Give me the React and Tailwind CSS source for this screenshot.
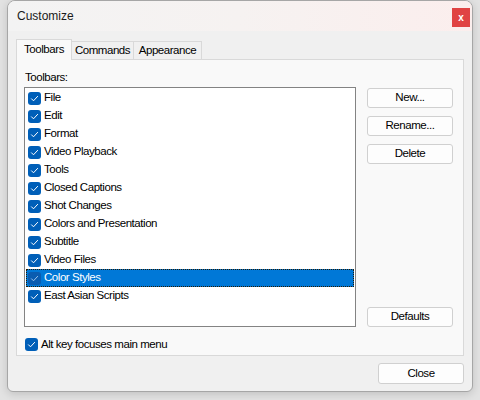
import React, { useState } from "react";

const toolbars = [
  "File",
  "Edit",
  "Format",
  "Video Playback",
  "Tools",
  "Closed Captions",
  "Shot Changes",
  "Colors and Presentation",
  "Subtitle",
  "Video Files",
  "Color Styles",
  "East Asian Scripts"
];

const CheckBox = ({ light }) => (
  <span
    className={`w-[13px] h-[13px] rounded-[3px] flex items-center justify-center shrink-0 ${light ? "bg-[#0a5cb0]" : "bg-[#005fb8]"}`}
  >
    <svg width="9" height="9" viewBox="0 0 9 9" fill="none">
      <path
        d="M1.5 4.8 L3.5 6.8 L7.6 2.4"
        stroke={light ? "#9fc3ea" : "#ffffff"}
        strokeWidth="1"
        strokeLinecap="round"
        strokeLinejoin="round"
      />
    </svg>
  </span>
);

const Button = ({ children, className = "" }) => (
  <button
    className={`h-[20px] w-[86px] rounded-[3px] border border-[#d0d0d0] bg-[#fdfdfd] leading-none ${className}`}
  >
    {children}
  </button>
);

const App = () => {
  const [selected, setSelected] = useState(10);

  return (
    <div
      className="w-[480px] h-[400px] bg-[#e2e2e2] pl-[7px]"
      style={{ fontFamily: "'Liberation Sans', Arial, sans-serif" }}
    >
      <div className="w-[466px] border border-[#a6a6a6] rounded-t-[8px] rounded-b-[6px] bg-[#f0f0f0] overflow-hidden shadow-[0_2px_8px_rgba(0,0,0,0.15)]">
        {/* title bar */}
        <div className="h-[30px] flex items-start justify-between bg-gradient-to-r from-[#f3f3f3] via-[#f6f2f1] to-[#fbeeed]">
          <span className="text-[12px] text-[#1a1a1a] mt-[9px] ml-[9px] leading-none">
            Customize
          </span>
          <button className="w-[18px] h-[19px] mt-[7px] mr-[2px] bg-[#e04343] text-white text-[10px] font-bold leading-none flex items-center justify-center">
            x
          </button>
        </div>

        <div className="px-[8px] pb-[7px] text-[11.5px] tracking-[-0.45px] text-black">
          {/* tabs */}
          <div className="flex items-end pt-[8px] h-[28px]">
            <div className="relative z-10 -mb-px h-[21px] w-[56px] flex items-center justify-center border border-b-0 border-[#d9d9d9] bg-[#f9f9f9]">
              Toolbars
            </div>
            <div className="h-[18px] w-[62px] flex items-center justify-center border border-b-0 border-l-0 border-[#d9d9d9] bg-[#f0f0f0]">
              Commands
            </div>
            <div className="h-[18px] w-[68px] flex items-center justify-center border border-b-0 border-l-0 border-[#d9d9d9] bg-[#f0f0f0]">
              Appearance
            </div>
          </div>

          {/* panel */}
          <div className="h-[297px] border border-[#d9d9d9] bg-[#f9f9f9] pl-[7px] pr-[9px] pt-[10px] flex flex-col">
            <div className="leading-[14px] ml-[1px] mb-[3px]">Toolbars:</div>
            <div className="flex gap-[11px]">
              <div className="w-[332px] h-[240px] border border-[#838383] bg-white px-[1px] pt-[1px]">
                {toolbars.map((name, i) => {
                  const isSel = i === selected;
                  return (
                    <div
                      key={name}
                      onClick={() => setSelected(i)}
                      className={`h-[18px] flex items-center gap-[3px] px-[1px] border border-dotted ${isSel ? "bg-[#0078d7] text-white border-[#2a1a00]" : "border-transparent"}`}
                    >
                      <CheckBox light={isSel} />
                      <span>{name}</span>
                    </div>
                  );
                })}
              </div>
              <div className="flex flex-col justify-between pt-[1px] h-[240px]">
                <div className="flex flex-col gap-[8px]">
                  <Button>New...</Button>
                  <Button>Rename...</Button>
                  <Button>Delete</Button>
                </div>
                <Button>Defaults</Button>
              </div>
            </div>
            <div className="flex items-center gap-[3px] mt-[9px] ml-[1px]">
              <CheckBox />
              <span>Alt key focuses main menu</span>
            </div>
          </div>

          <div className="flex justify-end pt-[7px]">
            <button className="h-[21px] w-[86px] rounded-[3px] border border-[#d0d0d0] bg-[#fdfdfd] leading-none">
              Close
            </button>
          </div>
        </div>
      </div>
    </div>
  );
};

export default App;
